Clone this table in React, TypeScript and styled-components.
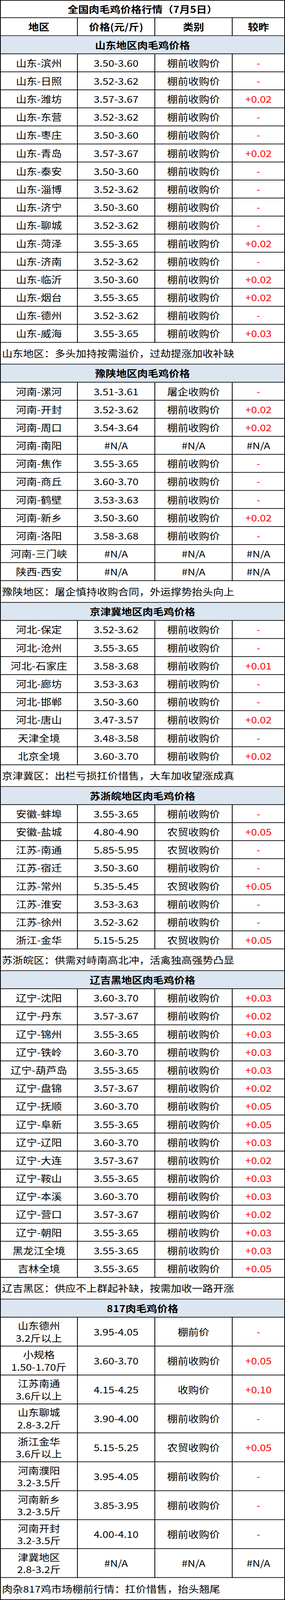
import styled, { createGlobalStyle } from 'styled-components';

type Row = [string, string, string, string];

interface Section {
  title: string;
  rows: Row[];
  note: string;
  tall?: boolean;
}

const P = '棚前收购价',
  N = '农贸收购价',
  NA = '#N/A';

const sections: Section[] = [
  {
    title: '山东地区肉毛鸡价格',
    rows: [
      ['山东-滨州', '3.50-3.60', P, '-'],
      ['山东-日照', '3.52-3.62', P, '-'],
      ['山东-潍坊', '3.57-3.67', P, '+0.02'],
      ['山东-东营', '3.52-3.62', P, '-'],
      ['山东-枣庄', '3.50-3.60', P, '-'],
      ['山东-青岛', '3.57-3.67', P, '+0.02'],
      ['山东-泰安', '3.50-3.60', P, '-'],
      ['山东-淄博', '3.52-3.62', P, '-'],
      ['山东-济宁', '3.50-3.60', P, '-'],
      ['山东-聊城', '3.52-3.62', P, '-'],
      ['山东-菏泽', '3.55-3.65', P, '+0.02'],
      ['山东-济南', '3.52-3.62', P, '-'],
      ['山东-临沂', '3.50-3.60', P, '+0.02'],
      ['山东-烟台', '3.55-3.65', P, '+0.02'],
      ['山东-德州', '3.52-3.62', P, '-'],
      ['山东-威海', '3.55-3.65', P, '+0.03'],
    ],
    note: '山东地区：多头加持按需溢价，过劫提涨加收补缺',
  },
  {
    title: '豫陕地区肉毛鸡价格',
    rows: [
      ['河南-漯河', '3.51-3.61', '屠企收购价', '-'],
      ['河南-开封', '3.52-3.62', P, '+0.02'],
      ['河南-周口', '3.54-3.64', P, '+0.02'],
      ['河南-南阳', NA, NA, NA],
      ['河南-焦作', '3.55-3.65', P, '-'],
      ['河南-商丘', '3.60-3.70', P, '-'],
      ['河南-鹤壁', '3.53-3.63', P, '-'],
      ['河南-新乡', '3.50-3.60', P, '+0.02'],
      ['河南-洛阳', '3.58-3.68', P, '-'],
      ['河南-三门峡', NA, NA, NA],
      ['陕西-西安', NA, NA, NA],
    ],
    note: '豫陕地区：屠企慎持收购合同，外运撑势抬头向上',
  },
  {
    title: '京津冀地区肉毛鸡价格',
    rows: [
      ['河北-保定', '3.52-3.62', P, '-'],
      ['河北-沧州', '3.55-3.65', P, '-'],
      ['河北-石家庄', '3.58-3.68', P, '+0.01'],
      ['河北-廊坊', '3.53-3.63', P, '-'],
      ['河北-邯郸', '3.50-3.60', P, '-'],
      ['河北-唐山', '3.47-3.57', P, '+0.02'],
      ['天津全境', '3.48-3.58', P, '-'],
      ['北京全境', '3.60-3.70', P, '+0.02'],
    ],
    note: '京津冀区：出栏亏损扛价惜售，大车加收望涨成真',
  },
  {
    title: '苏浙皖地区肉毛鸡价格',
    rows: [
      ['安徽-蚌埠', '3.55-3.65', P, '-'],
      ['安徽-盐城', '4.80-4.90', N, '+0.05'],
      ['江苏-南通', '5.85-5.95', N, '-'],
      ['江苏-宿迁', '3.50-3.60', P, '-'],
      ['江苏-常州', '5.35-5.45', N, '+0.05'],
      ['江苏-淮安', '3.53-3.63', P, '-'],
      ['江苏-徐州', '3.52-3.62', P, '-'],
      ['浙江-金华', '5.15-5.25', N, '+0.05'],
    ],
    note: '苏浙皖区：供需对峙南高北冲，活禽独高强势凸显',
  },
  {
    title: '辽吉黑地区肉毛鸡价格',
    rows: [
      ['辽宁-沈阳', '3.60-3.70', P, '+0.03'],
      ['辽宁-丹东', '3.57-3.67', P, '+0.02'],
      ['辽宁-锦州', '3.55-3.65', P, '+0.03'],
      ['辽宁-铁岭', '3.60-3.70', P, '+0.03'],
      ['辽宁-葫芦岛', '3.55-3.65', P, '+0.03'],
      ['辽宁-盘锦', '3.57-3.67', P, '+0.02'],
      ['辽宁-抚顺', '3.60-3.70', P, '+0.05'],
      ['辽宁-阜新', '3.55-3.65', P, '+0.05'],
      ['辽宁-辽阳', '3.60-3.70', P, '+0.03'],
      ['辽宁-大连', '3.57-3.67', P, '+0.02'],
      ['辽宁-鞍山', '3.55-3.65', P, '+0.03'],
      ['辽宁-本溪', '3.60-3.70', P, '+0.03'],
      ['辽宁-营口', '3.57-3.67', P, '+0.02'],
      ['辽宁-朝阳', '3.55-3.65', P, '+0.03'],
      ['黑龙江全境', '3.55-3.65', P, '+0.03'],
      ['吉林全境', '3.55-3.65', P, '+0.05'],
    ],
    note: '辽吉黑区：供应不上群起补缺，按需加收一路开涨',
  },
  {
    title: '817肉毛鸡价格',
    tall: true,
    rows: [
      ['山东德州\n3.2斤以上', '3.95-4.05', '棚前价', '-'],
      ['小规格\n1.50-1.70斤', '3.60-3.70', P, '+0.05'],
      ['江苏南通\n3.6斤以上', '4.15-4.25', '收购价', '+0.10'],
      ['山东聊城\n2.8-3.2斤', '3.90-4.00', P, '-'],
      ['浙江金华\n3.6斤以上', '5.15-5.25', N, '+0.05'],
      ['河南濮阳\n3.2-3.5斤', '3.95-4.05', P, '-'],
      ['河南新乡\n3.2-3.5斤', '3.85-3.95', P, '-'],
      ['河南开封\n3.2-3.5斤', '4.00-4.10', P, '-'],
      ['津冀地区\n2.8-3.2斤', NA, NA, NA],
    ],
    note: '肉杂817鸡市场棚前行情：扛价惜售，抬头翘尾',
  },
];

const SHEET_HEIGHT = 4701;

// row track sizes, top to bottom
const tracks: number[] = [51, 53];
sections.forEach((s, i) => {
  tracks.push(53);
  s.rows.forEach(() => tracks.push(s.tall ? 85 : 53));
  tracks.push(i === sections.length - 1 ? 65 : 64);
});

const GlobalStyle = createGlobalStyle`
  html, body {
    margin: 0;
    padding: 0;
    background: #ffffff;
    font-family: 'Noto Sans CJK SC', 'Noto Sans', sans-serif;
  }
`;

function App() {
  // the window can be shorter than the sheet: squeeze it so the whole table fits
  const fit = Math.min(1, window.innerHeight / SHEET_HEIGHT);

  return (
    <>
      <GlobalStyle />
      <Frame style={{ height: SHEET_HEIGHT * fit }}>
        <Sheet
          $rows={tracks.map((t) => t + 'px').join(' ')}
          style={fit < 1 ? { transform: `scaleY(${fit})` } : undefined}
        >
          <TitleCell>全国肉毛鸡价格行情（7月5日）</TitleCell>
          <HeadCell>地区</HeadCell>
          <HeadCell>价格(元/斤)</HeadCell>
          <HeadCell>类别</HeadCell>
          <HeadCell>较昨</HeadCell>
          {sections.map((section) => (
            <Block key={section.title}>
              <SectionCell>{section.title}</SectionCell>
              {section.rows.map((row) =>
                row.map((value, ci) => (
                  <Cell
                    key={row[0] + ci}
                    $wrap={section.tall && ci === 0}
                    $red={ci === 3 && value !== NA}
                  >
                    {value}
                  </Cell>
                ))
              )}
              <NoteCell>{section.note}</NoteCell>
            </Block>
          ))}
        </Sheet>
      </Frame>
    </>
  );
}

const Frame = styled.div`
  width: 729px;
  overflow: hidden;
`;

const Sheet = styled.div<{ $rows: string }>`
  width: 729px;
  box-sizing: border-box;
  display: grid;
  grid-template-columns: 197px 198px 198px 134px;
  grid-template-rows: ${(p) => p.$rows};
  border-top: 2px solid #000;
  border-left: 2px solid #000;
  transform-origin: 0 0;
  color: #000;
  font-size: 27px;
  line-height: 1.3;
`;

const Block = styled.div`
  display: contents;
`;

const BaseCell = styled.div`
  box-sizing: border-box;
  min-height: 0;
  overflow: hidden;
  border-right: 2px solid #000;
  border-bottom: 2px solid #000;
  display: flex;
  align-items: center;
  justify-content: center;
  text-align: center;
  white-space: nowrap;
`;

const TitleCell = styled(BaseCell)`
  grid-column: 1 / -1;
  font-weight: 700;
`;

const HeadCell = styled(BaseCell)`
  font-weight: 700;
`;

const SectionCell = styled(BaseCell)`
  grid-column: 1 / -1;
  font-weight: 700;
  background: #dce6f1;
`;

const Cell = styled(BaseCell)<{ $wrap?: boolean; $red?: boolean }>`
  white-space: ${(p) => (p.$wrap ? 'pre' : 'nowrap')};
  line-height: 36px;
  color: ${(p) => (p.$red ? '#ff0000' : '#000')};
`;

const NoteCell = styled(BaseCell)`
  grid-column: 1 / -1;
  justify-content: flex-start;
  padding-left: 3px;
`;

export default App;
